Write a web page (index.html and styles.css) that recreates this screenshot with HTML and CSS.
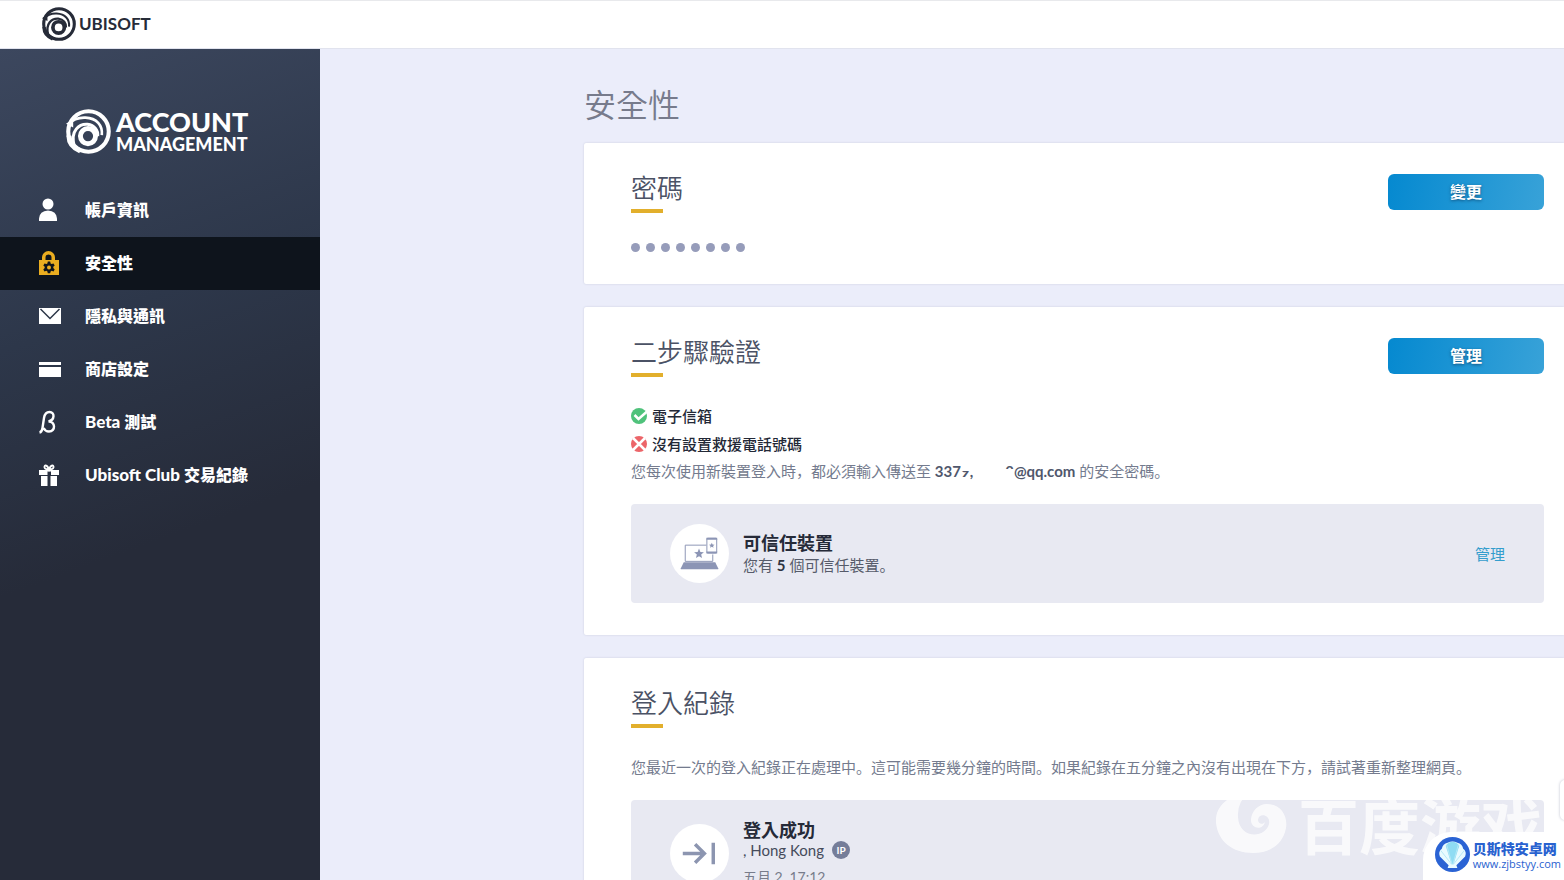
FILE: index.html
```html
<!DOCTYPE html>
<html lang="zh-Hant">
<head>
<meta charset="utf-8">
<title>帳戶管理 - 安全性</title>
<link rel="stylesheet" href="styles.css">
</head>
<body>
<svg class="defs" aria-hidden="true">
  <symbol id="swirl" viewBox="0 0 44 44">
    <g fill="none" stroke="currentColor">
      <circle cx="22" cy="22" r="19.800" stroke-width="4"/>
      <path d="M2 15Q9 8 19 8.500C30 9 36 16 35 25.500" stroke-width="2.600"/>
      <path d="M8 36C4 21 13 14.500 21 15c7 1 10.500 6 10 11.500" stroke-width="3"/>
      <circle cx="21.500" cy="26.500" r="7.400" stroke-width="4.800"/>
      <path d="M3 26q-.5 10 11 15" stroke-width="5"/>
    </g>
    <path d="M0 14.500 7 10v8z" fill="currentColor"/>
  </symbol>
</svg>
<div class="page">
  <header class="topbar">
    <a class="brand" href="#"><svg class="brand-icon"><use href="#swirl"/></svg><span>UBISOFT</span></a>
  </header>
  <div class="body">
    <aside class="sidebar">
      <div class="account">
        <svg class="account-icon"><use href="#swirl"/></svg>
        <div class="account-name"><span class="account-big">ACCOUNT</span><span class="account-small">MANAGEMENT</span></div>
      </div>
      <nav class="nav">
        <a class="nav-item" href="#"><svg class="nav-icon" viewBox="0 0 24 24"><circle cx="10" cy="6" r="5.500"/><path d="M1 23v-2.500Q1.500 13 10 12.500 18.500 13 19 20.500V23z"/></svg>帳戶資訊</a>
        <a class="nav-item active" href="#"><svg class="nav-icon" viewBox="0 0 24 24"><path fill-rule="evenodd" d="M1 9h3V6.500a6.500 6.500 0 0 1 13 0V9h4v15H1zM7.500 9h6V6.500a3 3 0 0 0-6 0z"/><path class="gear" d="M9.800 10.500h2.400l.4 1.900 1 .6 1.900-.6 1.200 2-1.400 1.400v1.200l1.400 1.400-1.200 2-1.900-.6-1 .6-.4 1.900H9.800l-.4-1.900-1-.6-1.900.6-1.200-2L6.700 17v-1.200l-1.400-1.400 1.200-2 1.900.6 1-.6z"/><circle cx="11" cy="16.400" r="2"/></svg>安全性</a>
        <a class="nav-item" href="#"><svg class="nav-icon" viewBox="0 0 24 24"><path d="M1 4h22v16H1z"/><path d="M2.500 5 12 14.500 21.500 5" fill="none" stroke="#2d3748" stroke-width="1.500"/></svg>隱私與通訊</a>
        <a class="nav-item" href="#"><svg class="nav-icon" viewBox="0 0 24 24"><path d="M1 5h22v3H1zM1 10h22v10H1z"/></svg>商店設定</a>
        <a class="nav-item" href="#"><svg class="nav-icon" viewBox="0 0 24 24"><path d="M1.500 22.500Q4 22 4.500 18L6 8Q7 2 11.500 2c5.500 0 5.500 8-1 9.500 7-.5 7.500 10 .5 10-3 0-4.500-1.500-5.500-3.500" fill="none" stroke="#fff" stroke-width="2.400"/></svg><span><span class="latin">Beta </span>測試</span></a>
        <a class="nav-item" href="#"><svg class="nav-icon" viewBox="0 0 24 24"><path d="M1 7h20v5h-8V8.500H9.500V12H1zM3 13h6.500v10H3zM12.500 13H19v10h-6.500z"/><path d="M11 6.500C9 1 6 2 6.500 4.500 7 6 9 6.500 11 6.500c2 0 4-.5 4.500-2C16 2 13 1 11 6.500z" fill="none" stroke="#fff" stroke-width="1.800"/></svg><span><span class="latin">Ubisoft Club </span>交易紀錄</span></a>
      </nav>
    </aside>
    <main class="main">
      <h1>安全性</h1>
      <section class="card password">
        <div class="card-head"><h2>密碼</h2><button class="btn" type="button">變更</button></div>
        <div class="dots" role="img" aria-label="密碼已隱藏"><i></i><i></i><i></i><i></i><i></i><i></i><i></i><i></i></div>
      </section>
      <section class="card two-step">
        <div class="card-head"><h2>二步驟驗證</h2><button class="btn" type="button">管理</button></div>
        <ul class="status">
          <li><svg viewBox="0 0 16 16"><circle cx="8" cy="8" r="8" fill="#4fc27b"/><path d="m3.500 7 4 4 8-7" fill="none" stroke="#fff" stroke-width="2.500"/></svg>電子信箱</li>
          <li><svg viewBox="0 0 16 16"><circle cx="8" cy="8" r="8" fill="#ec6569"/><path d="m2 2 12 12M14 2 2 14" stroke="#fff" stroke-width="2.500"/></svg>沒有設置救援電話號碼</li>
        </ul>
        <p class="text" lang="zh-Hans">您每次使用新裝置登入時，都必須輸入傳送至 <b>337<span class="part low">9,</span><span class="gap"></span><span class="part high">8</span>@qq.com</b> 的安全密碼。</p>
        <div class="panel">
          <span class="disc"><svg viewBox="0 0 60 60"><g fill="none" stroke="#8c95b5" stroke-width="1"><path d="M37 21.500H15.500V38h28v-7"/><rect x="37.500" y="14.500" width="10" height="15" rx="1"/></g><path d="M14 39h32l3 6v1H11v-1z" fill="#8c95b5"/><path d="M37 14h11v2H37zM37 28h11v2H37z" fill="#8c95b5"/><path d="m29.500 25 1.400 3.400 3.600.3-2.800 2.400.9 3.500-3.100-1.900-3.100 1.900.9-3.500-2.800-2.400 3.600-.3zM42.500 19l.8 1.800 2 .2-1.500 1.300.5 1.900-1.800-1-1.800 1 .5-1.900-1.500-1.300 2-.2z" fill="#8c95b5"/></svg></span>
          <div class="panel-text"><h3>可信任裝置</h3><p class="count" lang="zh-Hans">您有 <b>5</b> 個可信任裝置。</p></div>
          <a class="link" href="#">管理</a>
        </div>
      </section>
      <section class="card history">
        <div class="card-head"><h2>登入紀錄</h2></div>
        <p class="text" lang="zh-Hans">您最近一次的登入紀錄正在處理中。這可能需要幾分鐘的時間。如果紀錄在五分鐘之內沒有出現在下方，請試著重新整理網頁。</p>
        <div class="panel login">
          <span class="disc"><svg viewBox="0 0 60 60"><path d="M13 30h21M25.500 20.500 35 30l-9.500 9.500M44 19v22" fill="none" stroke="#8c95b0" stroke-width="3.500"/></svg></span>
          <div class="panel-text"><h3>登入成功</h3><p class="place">, Hong Kong <span class="ip">IP</span></p><p class="time">五月 2, 17:12</p></div>
        </div>
      </section>
    </main>
  </div>
  <div class="edge-tab"></div>
  <div class="watermark"><svg viewBox="0 0 72 66"><path d="M4 0h22q4 2 8 1-13 9-12 25c1 22 27 22 31 7 2-9-10-12-11-4 0 4 5 5 7 2-2 9-15 7-14-3 1-8 7-15 16-15 14 0 21 12 19 24-3 17-17 25-33 25C16 62 2 50 0 32-1 22 4 14 11 9 9 5 6 4 4 0z"/></svg><span lang="zh-Hans">百度游戏</span></div>
  <div class="stamp">
    <svg viewBox="0 0 36 36"><circle cx="18" cy="18" r="18" fill="#2a63d4"/><path d="M14 29 5 20q-2-5 2-8 1-5 6-6 5-3 10 0 5 1 6 6 4 3 2 8l-9 9 1 3H13z" fill="#e9fbff"/><path d="M17 28 11 9q3-4 7-4t7 4l-6 19z" fill="#8fdcf3"/><path d="M17 28 6 14M17.500 28 12 8M18.500 28 24 8M19 28l11-14" stroke="#b5e8f6" stroke-width="1"/></svg>
    <div class="stamp-text" lang="zh-Hans"><strong>贝斯特安卓网</strong><span>www.zjbstyy.com</span></div>
  </div>
</div>
</body>
</html>
```
FILE: styles.css
```css
* { box-sizing: border-box; margin: 0; padding: 0; }
body { font: 15px/22px Lato, "Noto Sans CJK SC", sans-serif; color: #747b8e; background: #ebedfa; }
a { text-decoration: none; color: inherit; }
svg { display: block; flex: none; }
.defs { position: absolute; width: 0; height: 0; }
.page { position: relative; height: 100vh; overflow: hidden; display: flex; flex-direction: column; }
.topbar { flex: none; height: 49px; padding: 0 42px 2px; display: flex; align-items: center; background: #fff; border-top: 1px solid #e8e9ec; border-bottom: 1px solid #e1e3ee; }
.brand { display: flex; align-items: center; gap: 3px; color: #262b38; font-size: 17px; line-height: 20px; font-weight: 700; }
.brand-icon { width: 34px; height: 34px; }
.body { flex: 1; min-height: 0; display: flex; }
.sidebar { flex: none; width: 320px; padding-top: 59px; background: linear-gradient(160deg, #3c475e 0, #2d374a 32%, #262b39 58%, #262b39 100%); color: #fff; }
.account { display: flex; align-items: center; gap: 5px; padding-left: 66px; height: 46px; }
.account-icon { width: 45px; height: 45px; }
.account-name { display: flex; flex-direction: column; font-weight: 900; }
.account-big { font-size: 27px; line-height: 25px; }
.account-small { font-size: 18px; line-height: 20px; }
.nav { margin-top: 30px; }
.nav-item { display: flex; align-items: center; gap: 23px; height: 53px; padding: 0 38px 2px; font-size: 16px; font-weight: 900; font-family: Lato, "Noto Sans CJK TC", sans-serif; white-space: nowrap; }
.nav-item.active { background: #0e141c; }
.nav-icon { width: 24px; height: 24px; fill: #fff; }
.latin { font-size: 17px; }
.active .nav-icon { fill: #eaad20; }
.active .gear { fill: #0e141c; }
.main { flex: 1; min-width: 0; padding: 33px 0 0 264px; }
h1 { font: 350 32px/46px Lato, "Noto Sans CJK TC", sans-serif; color: #777b8c; }
.card { background: #fff; margin-bottom: 23px; padding: 31px 20px 32px 47px; box-shadow: 0 0 2px #c5c8da; border-radius: 2px 0 0 2px; }
h1 + .card { margin-top: 15px; }
.card-head { display: flex; justify-content: space-between; align-items: flex-start; }
h2 { font: 350 26px/28px Lato, "Noto Sans CJK TC", sans-serif; color: #4b5265; }
h2::after { content: ""; display: block; width: 32px; height: 4px; margin-top: 7px; background: #e2af2c; }
.btn { width: 156px; height: 36px; border: 0; border-radius: 6px; background: linear-gradient(100deg, #0589d0, #38a2d8); color: #fff; font: 700 16px/20px Lato, "Noto Sans CJK TC", sans-serif; text-shadow: 0 1px 3px #10527f; }
.dots { display: flex; gap: 6px; margin-top: 30px; }
.dots i { width: 9px; height: 9px; border-radius: 50%; background: #969cba; }
.status { list-style: none; margin-top: 25px; color: #232836; font-weight: 500; }
.status li { display: flex; align-items: center; gap: 5px; height: 28px; }
.status svg { width: 16px; height: 16px; }
.text { white-space: nowrap; }
.two-step .text { margin-top: 2px; }
.text b { color: #50576c; }
.part { position: relative; display: inline-block; }
.part::after { content: ""; position: absolute; left: 0; right: 0; height: 11px; background: #fff; }
.low::after { top: 0; }
.high::after { top: 9px; }
.gap { display: inline-block; width: 32px; }
.panel { display: flex; align-items: center; gap: 14px; height: 99px; margin-top: 22px; padding: 0 39px; border-radius: 4px; background: #e8e9f2; }
.disc { width: 59px; height: 59px; flex: none; border-radius: 50%; background: #fff; }
.panel-text { flex: 1; color: #565b6a; }
h3 { font: 700 18px/22px Lato, "Noto Sans CJK TC", sans-serif; color: #252a38; }
.panel-text b { color: #2e3341; }
.link { color: #349dcd; }
.history { padding-bottom: 60px; }
.history .text { margin-top: 28px; }
.login { height: 130px; padding-top: 19px; align-items: flex-start; }
.login .disc { margin-top: 5px; }
.place { display: flex; align-items: center; gap: 8px; font-size: 15px; line-height: 18px; color: #454b5b; }
.ip { display: grid; place-items: center; width: 18px; height: 18px; border-radius: 50%; background: #757d99; color: #fff; font-size: 10px; font-weight: 700; line-height: 12px; }
.time { margin-top: 6px; font-size: 14px; line-height: 24px; color: #777c8b; }
.edge-tab { position: absolute; right: -8px; bottom: 60px; width: 12px; height: 40px; border-radius: 5px; background: #fff; box-shadow: 0 0 3px #bfc2cf; }
.watermark { position: absolute; right: 22px; bottom: 20px; display: flex; align-items: center; gap: 10px; color: #fff; opacity: .75; font: 700 61px/72px "Noto Sans CJK SC", sans-serif; }
.watermark svg { width: 72px; height: 66px; fill: #fff; }
.stamp { position: absolute; right: 0; bottom: 0; display: flex; align-items: center; gap: 3px; height: 48px; padding: 0 3px 4px 12px; border-radius: 28px 0 0 0; background: #fff; color: #2962d0; }
.stamp svg { width: 35px; height: 35px; }
.stamp-text { display: flex; flex-direction: column; }
.stamp strong { font: 900 14px/20px "Noto Sans CJK SC", sans-serif; }
.stamp-text span { font: 11px/12px "Open Sans", sans-serif; }
```
